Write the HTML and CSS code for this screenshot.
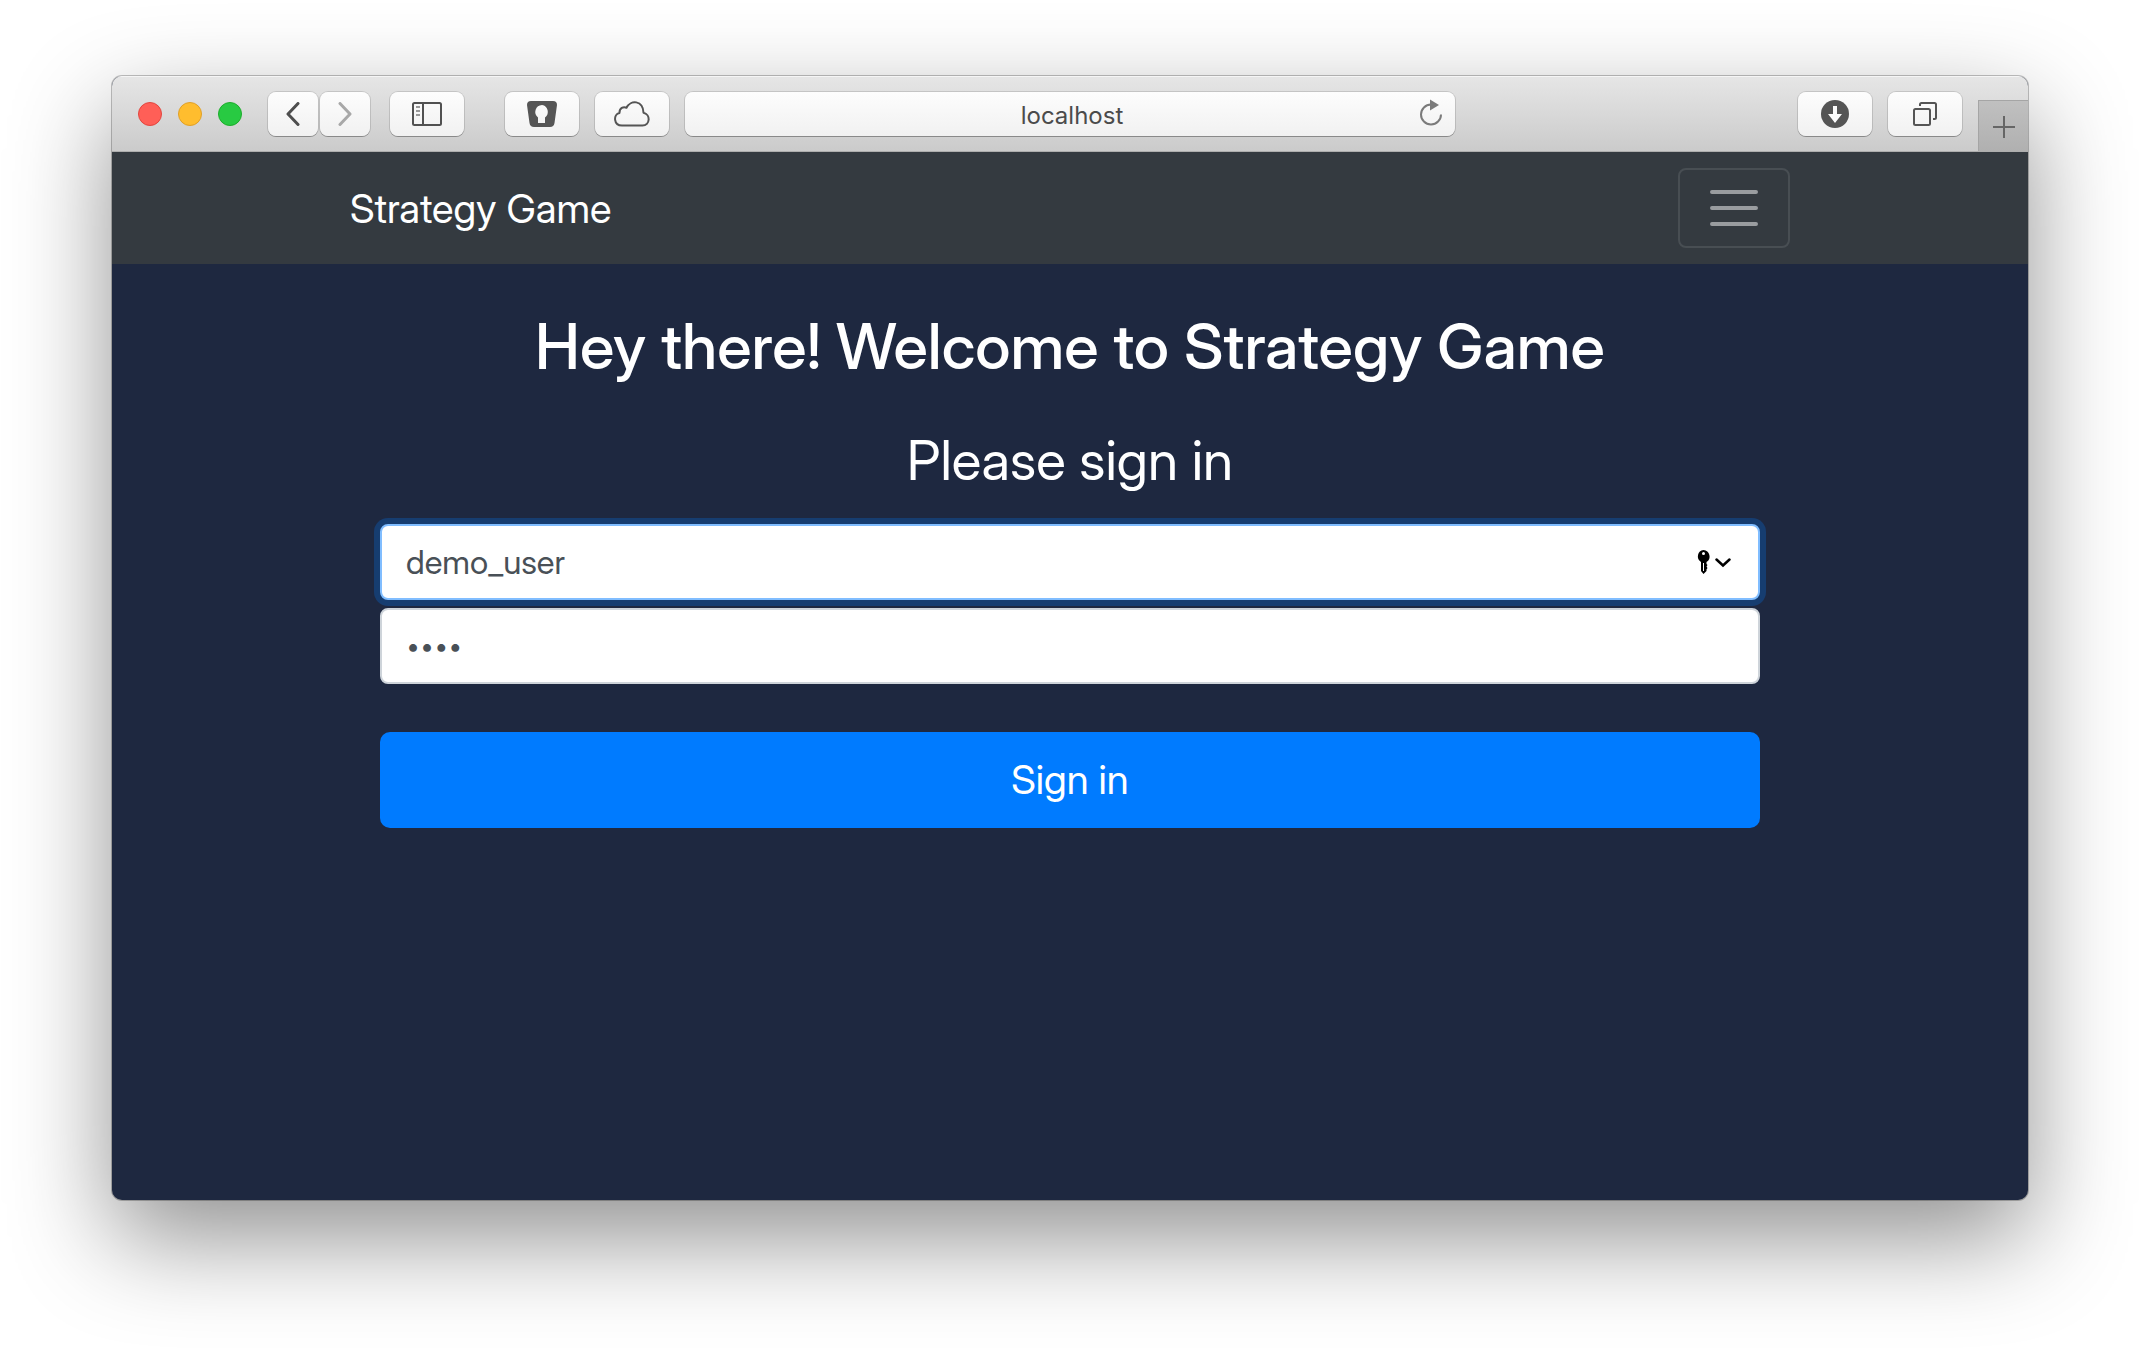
FILE: index.html
```html
<!DOCTYPE html>
<html lang="en">
<head>
<meta charset="utf-8">
<title>Strategy Game</title>
<link rel="stylesheet" href="styles.css">
</head>
<body>
<div class="window">
  <header class="toolbar">
    <div class="toolbar-side">
      <div class="lights">
        <button class="light light-close" type="button" aria-label="Close"></button>
        <button class="light light-minimize" type="button" aria-label="Minimize"></button>
        <button class="light light-zoom" type="button" aria-label="Zoom"></button>
      </div>
      <div class="history">
        <button class="tool tool-narrow" type="button" aria-label="Back">
          <svg width="14" height="24" viewBox="0 0 14 24"><path d="M12 1.500 2 12l10 10.500" fill="none" stroke="#4e4e4e" stroke-width="3" stroke-linecap="round" stroke-linejoin="round"/></svg>
        </button>
        <button class="tool tool-narrow" type="button" aria-label="Forward">
          <svg width="14" height="24" viewBox="0 0 14 24"><path d="M2 1.500 12 12 2 22.500" fill="none" stroke="#a8a8a8" stroke-width="3" stroke-linecap="round" stroke-linejoin="round"/></svg>
        </button>
      </div>
      <button class="tool" type="button" aria-label="Show sidebar">
        <svg width="30" height="24" viewBox="0 0 30 24" fill="none" stroke="#515151" stroke-width="2"><rect x="1" y="1" width="28" height="22" rx="1.500"/><path d="M11 1v22"/><path d="M4 5h4M4 9h4M4 13h4" stroke="#999"/></svg>
      </button>
      <div class="extensions">
        <button class="tool" type="button" aria-label="Password manager">
          <svg width="30" height="26" viewBox="0 0 30 26"><path fill="#555" fill-rule="evenodd" d="M4 0h22q4 0 4 4l-2.500 18q-.6 4-4.500 4H7q-3.900 0-4.500-4L0 4q0-4 4-4zM15 4a7 7 0 0 0-4 12.500V22h7v-5.500A7 7 0 0 0 15 4z"/></svg>
        </button>
        <button class="tool" type="button" aria-label="iCloud tabs">
          <svg width="36" height="26" viewBox="0 0 36 26"><path d="M8 24.500C-.5 24.500-1 13.500 5.500 12 5.300 7 9.500 5.300 12.500 6.800 16.500-1.500 29-1 29.500 11.800 37 13.500 36 24.500 28.500 24.500z" fill="none" stroke="#555" stroke-width="2" stroke-linejoin="round"/></svg>
        </button>
      </div>
    </div>
    <div class="address">
      <input class="address-input" type="text" value="localhost" aria-label="Address">
      <button class="reload" type="button" aria-label="Reload">
        <svg width="24" height="28" viewBox="0 0 24 28"><path d="M12 5.500a10 10 0 1 0 10 10" fill="none" stroke="#7b7b7b" stroke-width="2"/><path d="M11 .500 20 6l-9 5.500z" fill="#7b7b7b"/></svg>
      </button>
    </div>
    <div class="toolbar-side toolbar-end">
      <button class="tool" type="button" aria-label="Downloads">
        <svg width="28" height="28" viewBox="0 0 28 28"><circle cx="14" cy="14" r="14" fill="#555"/><path d="M12 6h4v8h5l-7 9-7-9h5z" fill="#fbfbfb"/></svg>
      </button>
      <button class="tool" type="button" aria-label="Show all tabs">
        <svg width="24" height="24" viewBox="0 0 24 24" fill="none" stroke="#555" stroke-width="2"><rect x="1" y="7" width="16" height="16" rx="1.500"/><path d="M7 4V2.500Q7 1 8.500 1h13Q23 1 23 2.500v13q0 1.500-1.500 1.500H20"/></svg>
      </button>
      <button class="new-tab" type="button" aria-label="New tab">
        <svg width="22" height="22" viewBox="0 0 22 22"><path d="M11 0v22M0 11h22" stroke="#666" stroke-width="2"/></svg>
      </button>
    </div>
  </header>

  <nav class="navbar">
    <div class="container navbar-inner">
      <a class="brand" href="#">Strategy Game</a>
      <button class="toggler" type="button" aria-label="Toggle navigation">
        <svg width="60" height="60" viewBox="0 0 30 30"><path d="M4 7h22M4 15h22M4 23h22" stroke="#999c9f" stroke-width="2" stroke-linecap="round"/></svg>
      </button>
    </div>
  </nav>

  <main class="container content">
    <h1 class="title">Hey there! Welcome to Strategy Game</h1>
    <form class="signin">
      <h2 class="subtitle">Please sign in</h2>
      <div class="field">
        <input class="control control-active" type="text" value="demo_user" aria-label="Username">
        <svg class="key" width="34" height="24" viewBox="0 0 34 24"><path fill-rule="evenodd" d="M6.500 0a6.500 6.500 0 0 1 3 12v2l1 1-1 1.500 1 1.500-1 1.500V21l-3 3L4 21V12A6.500 6.500 0 0 1 6.500 0zm0 2a1.500 1.500 0 1 0 0 3 1.500 1.500 0 0 0 0-3zM6 13v8h1v-8z"/><path d="m19.500 9.500 6.500 6 6.500-6" fill="none" stroke="#000" stroke-width="2.500" stroke-linecap="round"/></svg>
      </div>
      <input class="control control-password" type="password" value="demo" aria-label="Password">
      <button class="submit" type="submit">Sign in</button>
    </form>
  </main>
</div>
</body>
</html>
```
FILE: styles.css
```css
* {
  box-sizing: border-box;
}

body {
  display: flex;
  min-height: 100vh;
  margin: 0;
  padding: 76px 112px 148px;
  background: #fff;
  font-family: "Inter Display", Inter, "Liberation Sans", sans-serif;
}

button,
input {
  margin: 0;
  font-family: inherit;
}

svg {
  display: block;
}

.window {
  display: flex;
  flex: 1;
  flex-direction: column;
  min-width: 0;
  overflow: hidden;
  border-radius: 10px;
  background: #1e2840;
  box-shadow: 0 0 0 1px rgba(0, 0, 0, 0.24), 0 38px 100px rgba(0, 0, 0, 0.44);
}

.toolbar {
  display: grid;
  grid-template-columns: 1fr minmax(0, 770px) 1fr;
  align-items: center;
  height: 76px;
  border-bottom: 1px solid #aeaeae;
  background: linear-gradient(#e6e6e6, #cbcbcb);
  box-shadow: inset 0 1px #f5f5f5;
}

.toolbar-side {
  display: flex;
  align-items: center;
  padding: 0 16px 0 26px;
}

.toolbar-end {
  gap: 16px;
  justify-content: flex-end;
  align-self: stretch;
  padding: 0;
}

.lights {
  display: flex;
  gap: 16px;
  margin-right: 26px;
}

.light {
  width: 24px;
  height: 24px;
  padding: 0;
  border: 1px solid;
  border-radius: 50%;
}

.light-close {
  border-color: #e2463f;
  background: #ff5f57;
}

.light-minimize {
  border-color: #e0a028;
  background: #ffbd2e;
}

.light-zoom {
  border-color: #1dad2b;
  background: #28ca42;
}

.history {
  display: flex;
  gap: 2px;
  margin-right: 20px;
}

.extensions {
  display: flex;
  gap: 16px;
  margin-left: auto;
}

.tool,
.address {
  height: 44px;
  border: 0;
  border-radius: 8px;
  background: linear-gradient(#fdfdfd, #f1f1f1);
  box-shadow: 0 0 0 1px rgba(0, 0, 0, 0.12), 0 1px rgba(0, 0, 0, 0.25);
}

.tool {
  display: flex;
  flex: none;
  align-items: center;
  justify-content: center;
  width: 74px;
  padding: 0;
}

.tool-narrow {
  width: 50px;
}

.address {
  display: flex;
  align-items: center;
  padding: 0 12px 0 40px;
}

.address-input {
  flex: 1;
  min-width: 0;
  padding: 4px 0 0;
  border: 0;
  outline: 0;
  background: none;
  color: #4b4b4b;
  font-family: Inter, "Liberation Sans", sans-serif;
  font-size: 24px;
  text-align: center;
}

.reload {
  padding: 0 0 2px;
  border: 0;
  background: none;
}

.new-tab {
  display: flex;
  align-items: center;
  align-self: flex-end;
  justify-content: center;
  width: 50px;
  height: 51px;
  padding: 2px 0 0;
  border: solid #a5a5a5;
  border-width: 1px 0 0 1px;
  background: linear-gradient(#c0c0c0, #b0b0b0);
}

.navbar {
  background: #343a40;
}

.container {
  width: 100%;
  max-width: 1440px;
  margin: 0 auto;
}

.navbar-inner {
  display: flex;
  align-items: center;
  justify-content: space-between;
  padding: 16px 0;
}

.brand {
  color: #fff;
  font-size: 40px;
  text-decoration: none;
}

.toggler {
  padding: 8px 24px;
  border: 2px solid #484e53;
  border-radius: 8px;
  background: none;
}

.content {
  padding: 44px 30px;
  color: #fff;
  text-align: center;
}

.title {
  margin: 0 0 42px;
  font-size: 63px;
  font-weight: 500;
  line-height: 76px;
}

.signin {
  display: flex;
  flex-direction: column;
}

.subtitle {
  margin: 0 0 30px;
  font-size: 55px;
  font-weight: 400;
  line-height: 68px;
}

.field {
  position: relative;
  margin-bottom: 8px;
}

.control {
  display: block;
  width: 100%;
  height: 76px;
  padding: 0 24px;
  border: 2px solid #ced4da;
  border-radius: 8px;
  outline: 0;
  background: #fff;
  color: #495057;
  font-size: 33px;
}

.control-active {
  border-color: #80bdff;
  box-shadow: 0 0 0 6px rgba(0, 123, 255, 0.25);
}

.control-password {
  margin-bottom: 48px;
  font-family: Inter, "Liberation Sans", sans-serif;
  font-size: 25px;
}

.key {
  position: absolute;
  top: 26px;
  right: 29px;
}

.submit {
  height: 96px;
  padding: 0 0 2px;
  border: 0;
  border-radius: 10px;
  background: #007bff;
  color: #fff;
  font-size: 40px;
}
```
